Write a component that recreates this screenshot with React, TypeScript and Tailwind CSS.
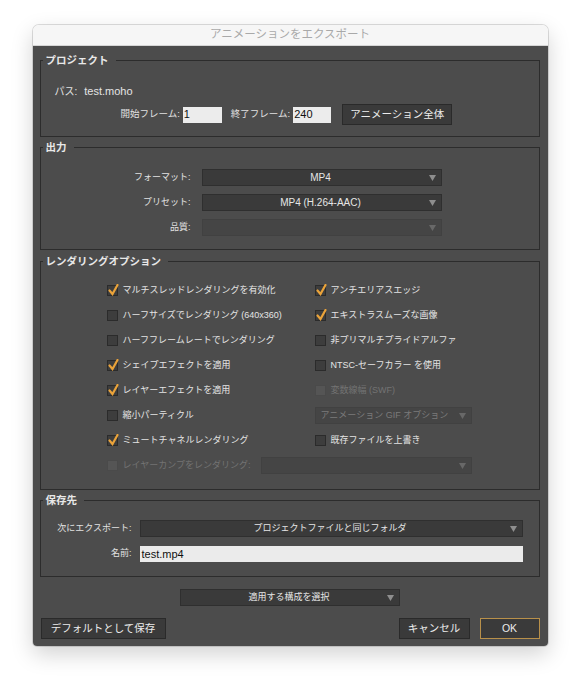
import type { ReactNode } from "react";
import clsx from "clsx";

const isLatin = (s: string) => /^[\x00-\x7f]*$/.test(s);

function Arrow({ dim }: { dim?: boolean }) {
  return (
    <svg width="7" height="6" viewBox="0 0 7 6" className="shrink-0">
      <path d="M0 0 H7 L3.5 6 Z" fill={dim ? "#686868" : "#8e8e8e"} />
    </svg>
  );
}

function Select({
  value = "",
  className,
  disabled,
  left,
}: {
  value?: string;
  className?: string;
  disabled?: boolean;
  left?: boolean;
}) {
  return (
    <div
      className={clsx(
        "flex h-[17px] items-center border pr-[5px]",
        isLatin(value) ? "text-[10px]" : "text-[9px]",
        disabled ? "border-[#414141] bg-[#454545] text-[#7a7a7a]" : "border-[#2f2f2f] bg-[#3a3a3a] text-[#e6e6e6]",
        className,
      )}
    >
      <span className={clsx("flex-1 truncate", left ? "pl-[5px] text-left" : "pl-[10px] text-center")}>{value}</span>
      <Arrow dim={disabled} />
    </div>
  );
}

function Check({ label, checked, disabled }: { label: string; checked?: boolean; disabled?: boolean }) {
  return (
    <div className="flex h-[25px] items-center gap-[5px]">
      <span
        className={clsx(
          "relative flex h-[11px] w-[11px] shrink-0 items-center justify-center border",
          disabled ? "border-[#4a4a4a] bg-[#555555]" : "border-[#2b2b2b] bg-[#3d3d3d]",
        )}
      >
        {checked && (
          <svg width="11" height="12" viewBox="0 0 11 12" className="absolute -top-[2px] left-0">
            <path d="M1.5 6.5 L4.5 10 L9.5 1" fill="none" stroke="#eaa33a" strokeWidth="2.2" strokeLinecap="round" />
          </svg>
        )}
      </span>
      <span className={clsx("whitespace-nowrap text-[9px]", disabled ? "text-[#737373]" : "text-[#e4e4e4]")}>{label}</span>
    </div>
  );
}

function Group({ title, children, className }: { title: string; children: ReactNode; className?: string }) {
  return (
    <fieldset className={clsx("ml-[7px] mr-[8px] border border-[#2c2c2c] p-0", className)}>
      <legend className="ml-[2px] pl-[3px] pr-[7px] text-[10.5px] font-bold leading-[14px] text-[#e8e8e8]">{title}</legend>
      {children}
    </fieldset>
  );
}

function Button({ children, className, primary }: { children: ReactNode; className?: string; primary?: boolean }) {
  return (
    <div
      className={clsx(
        "flex h-[21px] items-center justify-center border bg-[#3a3a3a] text-[10.5px] text-[#ececec]",
        primary ? "border-[#b8904a]" : "border-[#2a2a2a]",
        className,
      )}
    >
      {children}
    </div>
  );
}

export default function App() {
  return (
    <div className="min-h-screen bg-white pt-[25px] font-['Liberation_Sans','Noto_Sans_CJK_JP',sans-serif]">
      <div className="mx-auto w-[515px] overflow-hidden rounded-t-[6px] rounded-b-[4px] shadow-[0_0_0_1px_rgba(0,0,0,0.13),0_8px_22px_rgba(0,0,0,0.18)]">
        {/* title bar */}
        <div className="flex h-[21px] items-center justify-center border-b border-[#d6d6d6] bg-[#f6f6f6] text-[11.5px] text-[#a9a9a9]">
          アニメーションをエクスポート
        </div>

        <div className="bg-[#4c4c4c] pb-[7px] pt-[7px]">
          {/* project */}
          <Group title="プロジェクト" className="pb-[13px]">
            <div className="mt-[17px] flex h-[14px] items-center pl-[14px] text-[#e4e4e4]">
              <span className="text-[10px]">パス:</span>
              <span className="ml-[7px] text-[11px]">test.moho</span>
            </div>
            <div className="mt-[8px] flex h-[17px] items-center pl-[80px] text-[9.5px] text-[#e2e2e2]">
              <span>開始フレーム:</span>
              <div className="ml-[3px] flex h-[16px] w-[39px] items-center bg-[#ececec] pl-[1px] text-[11px] text-[#111]">1</div>
              <span className="ml-[9px]">終了フレーム:</span>
              <div className="ml-[3px] flex h-[16px] w-[38px] items-center bg-[#ececec] pl-[1px] text-[11px] text-[#111]">240</div>
              <Button className="ml-[11px] h-[17px] w-[110px]">アニメーション全体</Button>
            </div>
          </Group>

          {/* output */}
          <Group title="出力" className="mt-[3px] pb-[13px]">
            <div className="mt-[15px] flex flex-col gap-[8px]">
              {[
                { label: "フォーマット:", value: "MP4" },
                { label: "プリセット:", value: "MP4 (H.264-AAC)" },
                { label: "品質:", value: "", disabled: true },
              ].map((r) => (
                <div key={r.label} className="flex items-center">
                  <span className="w-[150px] text-right text-[9px] text-[#e2e2e2]">{r.label}</span>
                  <Select value={r.value} disabled={r.disabled} className="ml-[11px] w-[240px]" />
                </div>
              ))}
            </div>
          </Group>

          {/* render options */}
          <Group title="レンダリングオプション" className="mt-[4px] pb-[11px]">
            <div className="mt-[10px] grid grid-cols-[208px_157px] pl-[66px]">
              <Check checked label="マルチスレッドレンダリングを有効化" />
              <Check checked label="アンチエリアスエッジ" />
              <Check label="ハーフサイズでレンダリング (640x360)" />
              <Check checked label="エキストラスムーズな画像" />
              <Check label="ハーフフレームレートでレンダリング" />
              <Check label="非プリマルチプライドアルファ" />
              <Check checked label="シェイプエフェクトを適用" />
              <Check label="NTSC-セーフカラー を使用" />
              <Check checked label="レイヤーエフェクトを適用" />
              <Check disabled label="変数線幅 (SWF)" />
              <Check label="縮小パーティクル" />
              <div className="flex h-[25px] items-center">
                <Select disabled left value="アニメーション GIF オプション" className="w-[157px]" />
              </div>
              <Check checked label="ミュートチャネルレンダリング" />
              <Check label="既存ファイルを上書き" />
              <div className="col-span-2 flex h-[25px] items-center">
                <Check disabled label="レイヤーカンプをレンダリング:" />
                <Select disabled className="ml-auto w-[211px]" />
              </div>
            </div>
          </Group>

          {/* destination */}
          <Group title="保存先" className="mt-[3px] pb-[14px]">
            <div className="mt-[13px] flex items-center">
              <span className="w-[91px] text-right text-[9px] text-[#e2e2e2]">次にエクスポート:</span>
              <Select value="プロジェクトファイルと同じフォルダ" className="ml-[8px] w-[383px]" />
            </div>
            <div className="mt-[9px] flex items-center">
              <span className="w-[91px] text-right text-[9px] text-[#e2e2e2]">名前:</span>
              <div className="ml-[8px] flex h-[16px] w-[383px] items-center bg-[#ebebeb] pl-[2px] text-[11px] text-[#111]">test.mp4</div>
            </div>
          </Group>

          <Select value="適用する構成を選択" className="mx-auto mt-[12px] w-[220px]" />

          <div className="mt-[12px] flex items-center justify-between px-[8px]">
            <Button className="w-[125px]">デフォルトとして保存</Button>
            <div className="flex items-center gap-[10px]">
              <Button className="w-[71px]">キャンセル</Button>
              <Button primary className="w-[60px]">OK</Button>
            </div>
          </div>
        </div>
      </div>
    </div>
  );
}
